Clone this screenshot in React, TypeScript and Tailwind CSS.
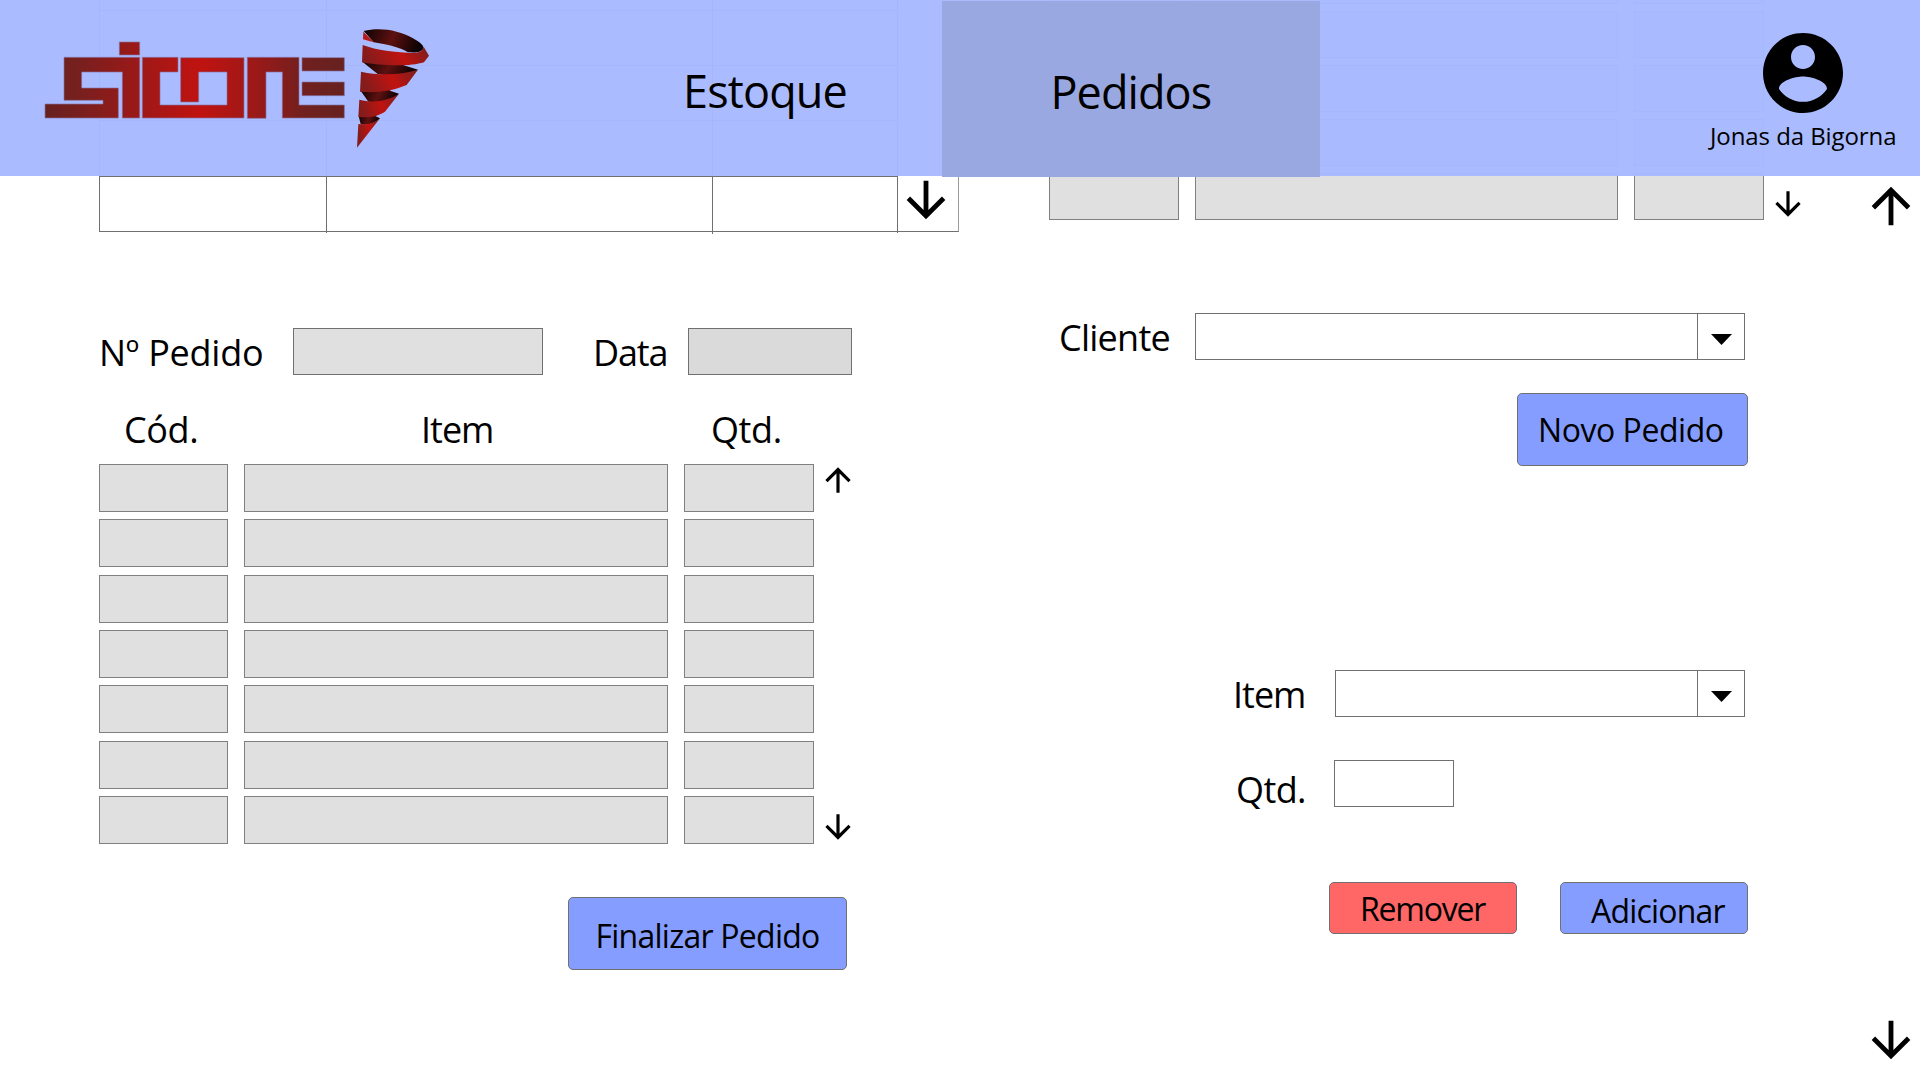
import React from "react";

const BORDER = "border-[#707070]";

function Arrow({ size, down = false }: { size: number; down?: boolean }) {
  return (
    <svg width={size} height={size} viewBox="0 0 24 24" className="block shrink-0" fill="#000">
      {down ? (
        <path d="M20 12l-1.41-1.41L13 16.17V4h-2v12.17l-5.58-5.59L4 12l8 8 8-8z" />
      ) : (
        <path d="M4 12l1.41 1.41L11 7.83V20h2V7.83l5.58 5.59L20 12l-8-8-8 8z" />
      )}
    </svg>
  );
}

function Logo() {
  return (
    <svg width="420" height="145" viewBox="0 0 1260 435" className="mt-[15px] ml-[30px] block shrink-0">
      <defs>
        <linearGradient id="word" gradientUnits="userSpaceOnUse" x1="45" y1="0" x2="943" y2="0">
          <stop offset="0" stopColor="#66211f" />
          <stop offset="0.1" stopColor="#75201f" />
          <stop offset="0.3" stopColor="#9a1918" />
          <stop offset="0.52" stopColor="#c01310" />
          <stop offset="0.7" stopColor="#9c1918" />
          <stop offset="0.87" stopColor="#70201f" />
          <stop offset="1" stopColor="#66211f" />
        </linearGradient>
        <linearGradient id="face" x1="0" y1="0.2" x2="1" y2="0">
          <stop offset="0" stopColor="#851c1b" />
          <stop offset="0.5" stopColor="#c01310" />
          <stop offset="1" stopColor="#74201f" />
        </linearGradient>
        <linearGradient id="inner" x1="0" y1="0" x2="1" y2="0.15">
          <stop offset="0" stopColor="#0c0202" />
          <stop offset="0.52" stopColor="#5e1110" />
          <stop offset="1" stopColor="#0c0202" />
        </linearGradient>
      </defs>
      <g fill="url(#word)" stroke="#8a6f9f" strokeWidth="2">
        <path d="M268 81H329V120H268Z" />
        <path d="M102 127H329V309H277V171H155V219H265V309H45V267H219V256H102Z" />
        <path d="M337 127H444V171H390V270H591V171H506V261H452V128H642V309H337Z" />
        <path d="M652 127H807V270H943V309H757V171H708V310H652Z" />
        <path d="M816 128H943V168H816Z" />
        <path d="M816 201H943V242H816Z" />
      </g>
      <path fill="url(#inner)" d="M1001 48C1050 36 1108 46 1149 70C1170 82 1180 91 1181 99C1178 110 1160 114 1134 112C1110 98 1080 90 1031 82Z" />
      <path fill="#b81a18" d="M1000 50L1031 82L999 73Z" />
      <path fill="url(#inner)" d="M997 140C1040 146 1080 146 1119 146L1119 150L1164 164C1130 184 1090 186 1043 177Z" />
      <path fill="url(#inner)" d="M992 227C1025 228 1055 226 1080 222L1080 227L1107 236C1085 258 1050 266 1015 260Z" />
      <path fill="url(#inner)" d="M986 303C1005 304 1025 302 1037 298L1037 304L1050 310C1035 326 1010 332 992 328Z" />
      <path fill="url(#face)" d="M998 90C1040 106 1100 112 1134 113C1165 116 1182 108 1181 95L1197 122L1182 142C1140 156 1050 152 996 142Z" />
      <path fill="url(#face)" d="M993 170C1050 182 1110 180 1164 164L1130 210C1090 226 1050 235 990 230Z" />
      <path fill="url(#face)" d="M988 254C1035 266 1075 256 1107 236L1065 290C1045 303 1020 310 985 306Z" />
      <path fill="url(#face)" d="M985 327C1010 331 1035 324 1050 310L981 398Z" />
    </svg>
  );
}

const stockColumns = [
  { width: "w-[227px]", line: "h-[232px]" },
  { width: "w-[386px]", line: "h-[233px]" },
  { width: "w-[185px]", line: "h-[234px]" },
];
const stockRows = ["h-[11px]", "h-[55px]", "h-[55px]", "h-[56px]", "h-[55px]"];

function StockTable() {
  return (
    <div className="ml-[99px] flex h-[234px] items-start">
      {stockColumns.map((c) => (
        <div key={c.width} className={`${c.width} flex items-start`}>
          <div className={`${c.line} w-px shrink-0 bg-[#707070]`} />
          <div className="grow">
            {stockRows.map((h, i) => (
              <div key={i} className={`${h} border-b ${BORDER}`} />
            ))}
          </div>
        </div>
      ))}
      <div className="h-[233px] w-px bg-[#707070]" />
      <div className="flex h-[232px] w-[61px] items-end justify-center border-r border-b border-r-[#9c9c9c] border-b-[#707070] pr-[5px] pb-[2px]">
        <Arrow size={58} down />
      </div>
    </div>
  );
}

function Cells({ height, widths }: { height: string; widths: string[] }) {
  return (
    <div className="flex gap-[16px]">
      {widths.map((w, i) => (
        <div key={i} className={`${w} ${height} shrink-0 border border-[#808080] bg-[#e0e0e0]`} />
      ))}
    </div>
  );
}

function Select({ width }: { width: string }) {
  return (
    <div className={`${width} flex h-[47px] shrink-0 justify-end border ${BORDER} bg-white`}>
      <div className={`w-[47px] border-l ${BORDER} pt-[19.5px] pl-[13px]`}>
        <svg width="21" height="11" viewBox="0 0 21 11" className="block">
          <path d="M0 0H21L10.5 11Z" />
        </svg>
      </div>
    </div>
  );
}

const label = "block shrink-0 whitespace-nowrap text-[36px] leading-none";
const button = "block rounded-[5px] border border-[#707070] text-left whitespace-nowrap text-[32px] leading-none";

export default function App() {
  return (
    <div className="relative h-[1080px] w-[1920px] overflow-hidden bg-white font-['Open_Sans',sans-serif] text-black">
      <main className="flex h-full">
        <section className="w-[960px] shrink-0">
          <StockTable />
          <div className="mt-[94px] ml-[99px] flex h-[47px]">
            <span className={`${label} mt-[7px] w-[194px] tracking-[-0.25px]`}>Nº Pedido</span>
            <div className={`w-[250px] border ${BORDER} bg-[#e0e0e0]`} />
            <span className={`${label} mt-[7px] ml-[50px] w-[95px] tracking-[-1.13px]`}>Data</span>
            <div className={`w-[164px] border ${BORDER} bg-[#dadada]`} />
          </div>
          <div className="mt-[37px] ml-[124px] flex">
            <span className={`${label} w-[297px] tracking-[-0.4px]`}>Cód.</span>
            <span className={`${label} w-[290px] tracking-[-1px]`}>Item</span>
            <span className={`${label} tracking-[-0.4px]`}>Qtd.</span>
          </div>
          <div className="mt-[16px] ml-[99px] flex h-[380px]">
            <div className="flex flex-col gap-[7.33px]">
              {[0, 1, 2, 3, 4, 5, 6].map((r) => (
                <Cells key={r} height="h-[48px]" widths={["w-[129px]", "w-[424px]", "w-[130px]"]} />
              ))}
            </div>
            <div className="-mt-[3px] ml-[5px] flex h-[385px] flex-col justify-between">
              <Arrow size={38} />
              <Arrow size={38} down />
            </div>
          </div>
          <button className={`${button} mt-[53px] ml-[568px] h-[73px] w-[279px] bg-[#859dff] pt-[4px] pl-[26.5px] tracking-[-0.75px]`}>
            Finalizar Pedido
          </button>
        </section>

        <section className="w-[902px] shrink-0">
          <div className="ml-[89px] flex h-[220px]">
            <div className="-mt-[43px] flex flex-col gap-[7px]">
              {[0, 1, 2, 3, 4].map((r) => (
                <Cells key={r} height="h-[47px]" widths={["w-[130px]", "w-[423px]", "w-[130px]"]} />
              ))}
            </div>
            <div className="mt-[185px] ml-[5px]">
              <Arrow size={38} down />
            </div>
          </div>
          <div className="mt-[93px] ml-[99px] flex">
            <span className={`${label} mt-[7px] w-[136px] tracking-[-0.75px]`}>Cliente</span>
            <Select width="w-[550px]" />
          </div>
          <button className={`${button} mt-[33px] ml-[557px] h-[73px] w-[231px] bg-[#859dff] pl-[20px] tracking-[-0.46px]`}>
            Novo Pedido
          </button>
          <div className="mt-[204px] ml-[273px] flex">
            <span className={`${label} mt-[7px] w-[102px] tracking-[-1px]`}>Item</span>
            <Select width="w-[410px]" />
          </div>
          <div className="mt-[43px] ml-[276px] flex h-[47px]">
            <span className={`${label} mt-[12px] w-[98px] tracking-[-0.6px]`}>Qtd.</span>
            <div className={`h-[47px] w-[120px] border ${BORDER}`} />
          </div>
          <div className="mt-[75px] ml-[369px] flex gap-[43px]">
            <button className={`${button} h-[52px] w-[188px] bg-[#ff6666] pt-[2px] pl-[30px] tracking-[-1.2px]`}>Remover</button>
            <button className={`${button} h-[52px] w-[188px] bg-[#859dff] pt-[5px] pl-[30px] tracking-[-0.8px]`}>Adicionar</button>
          </div>
        </section>

        <aside className="flex w-[58px] shrink-0 flex-col justify-between pt-[176.5px] pb-[11px]">
          <Arrow size={58} />
          <Arrow size={58} down />
        </aside>
      </main>

      <header className="absolute top-0 left-0 flex h-[176px] w-full bg-[#a7baff]/97">
        <Logo />
        <nav className="flex text-[45px] leading-none">
          <a className="w-[492px] pt-[68px] pl-[233px] tracking-[-0.85px]">Estoque</a>
          <a className="mt-px h-[176px] w-[378px] bg-[#99a8e1] pt-[68px] pl-[108.5px] tracking-[-0.95px]">Pedidos</a>
        </nav>
        <div className="w-[600px] pt-[25px]">
          <svg width="96" height="96" viewBox="0 0 24 24" className="ml-[435px] block">
            <path d="M12 2C6.48 2 2 6.48 2 12s4.48 10 10 10 10-4.48 10-10S17.52 2 12 2zm0 3c1.66 0 3 1.34 3 3s-1.34 3-3 3-3-1.34-3-3 1.34-3 3-3zm0 14.2c-2.5 0-4.71-1.28-6-3.22.03-1.99 4-3.08 6-3.08 1.99 0 5.97 1.09 6 3.08-1.29 1.94-3.5 3.22-6 3.22z" />
          </svg>
          <span className="mt-[3px] ml-[390px] block text-[24px] leading-none tracking-[-0.08px]">Jonas da Bigorna</span>
        </div>
      </header>
    </div>
  );
}
